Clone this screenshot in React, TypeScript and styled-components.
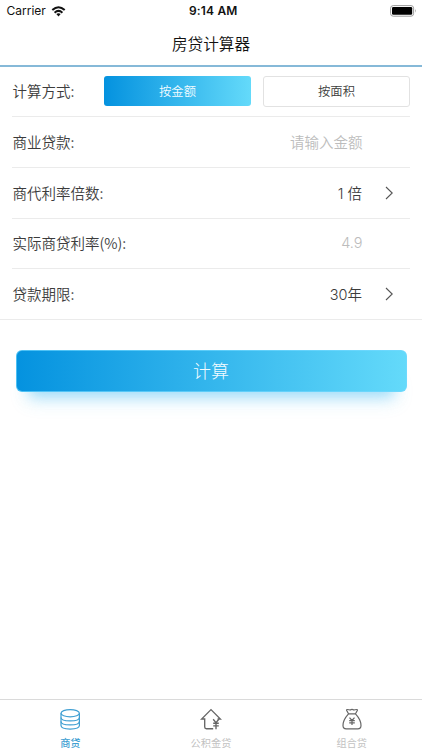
import React from "react";
import styled, { createGlobalStyle } from "styled-components";

const GlobalStyle = createGlobalStyle`
  * { box-sizing: border-box; }
  body { margin: 0; background: #fff; }
  button { font: inherit; margin: 0; padding: 0; cursor: pointer; }
`;

const Screen = styled.div`
  width: 100%;
  height: 750px;
  display: flex;
  flex-direction: column;
  background: #fff;
  color: #4a4a4a;
  font-family: Inter, "Noto Sans CJK SC", sans-serif;
`;

const StatusBar = styled.div`
  height: 22px;
  display: grid;
  grid-template-columns: 1fr auto 1fr;
  align-items: center;
  padding: 0 5px 0 6.5px;
  color: #111;
  font-size: 12px;
  line-height: 22px;
`;

const Carrier = styled.div`
  display: flex;
  align-items: center;
  gap: 5px;
`;

const Clock = styled.div`
  font-weight: 600;
  letter-spacing: 0.18px;
  padding-left: 3px;
`;

const BatteryBox = styled.div`
  display: flex;
  justify-content: flex-end;
`;

const Title = styled.h1`
  margin: 0;
  height: 45px;
  border-bottom: 2px solid #86b9d8;
  text-align: center;
  color: #111;
  font-size: 15.6px;
  font-weight: 350;
  line-height: 45px;
`;

const Form = styled.div`
  height: 253px;
  display: grid;
  grid-template-rows: 50px 51px 51px 50px 50px;
  border-bottom: 1px solid #ebebeb;
`;

const Row = styled.div<{ $last?: boolean }>`
  margin: 0 12px;
  display: flex;
  align-items: center;
  border-bottom: ${(p) => (p.$last ? "none" : "1px solid #ebebeb")};
  font-size: 14.5px;
  font-weight: 350;
`;

const Label = styled.div`
  flex: 1;
  padding-left: 0.5px;
  padding-bottom: 2px;
  white-space: nowrap;
  color: #3c3c3c;
  font-family: "Noto Sans CJK SC", sans-serif;
`;

const Value = styled.div<{ $muted?: boolean }>`
  color: ${(p) => (p.$muted ? "#bcbcbc" : "#3c3c3c")};
  padding-right: ${(p) => (p.$muted ? "47.5px" : "23px")};
  padding-bottom: 2px;
`;

const ArrowBox = styled.div`
  display: flex;
  padding-right: 16px;
`;

const Modes = styled.div`
  display: flex;
  gap: 12px;
`;

const ModeButton = styled.button<{ $active?: boolean }>`
  width: 147px;
  height: ${(p) => (p.$active ? "30px" : "31px")};
  padding-bottom: 1px;
  border-radius: 3px;
  border: ${(p) => (p.$active ? "none" : "1px solid #e2e2e2")};
  background: ${(p) => (p.$active ? "linear-gradient(90deg, #0492df, #64dafa)" : "#fff")};
  color: ${(p) => (p.$active ? "#f2fbff" : "#3c3c3c")};
  && { font-size: 12.3px; }
`;

const Submit = styled.button`
  align-self: center;
  margin: 30px 0 0;
  padding-bottom: 2px;
  width: 391px;
  height: 42px;
  border: 1px solid rgba(115, 217, 255, 0.65);
  border-radius: 6px;
  background: linear-gradient(90deg, #0492df, #64dafa) border-box;
  box-shadow: 0 16px 14px -14px rgba(72, 190, 245, 0.5), 0 20px 18px -12px rgba(72, 190, 245, 0.25);
  color: #f2fbff;
  && { font-size: 18px; font-weight: 300; }
`;

const TabBar = styled.nav`
  margin-top: auto;
  height: 51px;
  border-top: 1px solid #dadada;
  display: grid;
  grid-template-columns: repeat(3, 1fr);
`;

const Tab = styled.div<{ $active?: boolean }>`
  display: flex;
  flex-direction: column;
  align-items: center;
  padding-top: 8px;
  color: ${(p) => (p.$active ? "#3f9fd2" : "#c2c2c2")};
  font-size: 10.2px;
  font-weight: ${(p) => (p.$active ? 500 : 400)};
  line-height: 15px;
  svg { margin-bottom: 5px; }
`;

const Wifi = () => (
  <svg width="15" height="11" viewBox="0 0 14 11">
    <g fill="none" stroke="#111" strokeWidth="2">
      <path d="M0.8 4.1Q7-1.7 13.2 4.1" />
      <path d="M3.1 6.7Q7 3.1 10.9 6.7" />
    </g>
    <path d="M4.8 8Q7 6.3 9.2 8L7 10.4Z" fill="#111" />
  </svg>
);

const Battery = () => (
  <svg width="27" height="12" viewBox="0 0 27 12">
    <rect x="0.6" y="0.6" width="23" height="10.6" rx="2.6" fill="none" stroke="#9b9b9b" />
    <rect x="2" y="2" width="20.2" height="7.8" rx="1.3" fill="#000" />
    <path d="M25 4.1Q26.6 5.9 25 7.7Z" fill="#9b9b9b" />
  </svg>
);

const Arrow = () => (
  <ArrowBox>
    <svg width="9" height="14" viewBox="0 0 9 14" fill="none" stroke="#555" strokeWidth="1.1">
      <path d="M1 1L7.2 7L1 13" />
    </svg>
  </ArrowBox>
);

const Coins = () => (
  <svg width="22" height="23" viewBox="0 0 22 23" fill="none" stroke="#3f9fd2" strokeWidth="1.2">
    <ellipse cx="11.2" cy="5.2" rx="9.2" ry="3.6" />
    <path d="M2 5.2V17.6C2 22.2 20.4 22.2 20.4 17.6V5.2" />
    <path d="M2 9.4C2 14 20.4 14 20.4 9.4M2 13.5C2 18.1 20.4 18.1 20.4 13.5" />
  </svg>
);

const House = () => (
  <svg width="22" height="23" viewBox="0 0 22 23" fill="none" stroke="#666" strokeWidth="1.35">
    <path d="M17.6 11H20.4L11 1.6L1.6 11H4.7V19Q4.7 20.7 6.4 20.7H13.2" />
    <path d="M13.2 11.3L16 14.7L18.8 11.3M16 14.7V21.3M13.2 15.2H18.8M13.2 17.8H18.8" />
  </svg>
);

const MoneyBag = () => (
  <svg width="22" height="23" viewBox="0 0 22 23" fill="none" stroke="#666" strokeWidth="1.2">
    <path d="M7.5 5.8L5.6 2.4Q5.4 1.5 6.4 1.5Q8.2 1.6 9.1 2Q11 0.9 12.9 2Q13.8 1.6 15.6 1.5Q16.6 1.5 16.4 2.4L14.5 5.8C17 8.5 20 13.2 20 17.5Q20 20.8 16.8 20.8H5.2Q2 20.8 2 17.5C2 13.2 5 8.5 7.5 5.8Z" />
    <path d="M7.5 5.9H14.5M8.5 9.7L11 12.5L13.5 9.7M11 12.5V17M8.2 12.6H13.8M8.2 14.8H13.8" />
  </svg>
);

export default function App() {
  return (
    <Screen>
      <GlobalStyle />
      <StatusBar>
        <Carrier>Carrier <Wifi /></Carrier>
        <Clock>9:14 AM</Clock>
        <BatteryBox><Battery /></BatteryBox>
      </StatusBar>
      <Title>房贷计算器</Title>
      <Form>
        <Row>
          <Label>计算方式:</Label>
          <Modes>
            <ModeButton $active>按金额</ModeButton>
            <ModeButton>按面积</ModeButton>
          </Modes>
        </Row>
        <Row>
          <Label>商业贷款:</Label>
          <Value $muted>请输入金额</Value>
        </Row>
        <Row>
          <Label>商代利率倍数:</Label>
          <Value>1 倍</Value>
          <Arrow />
        </Row>
        <Row>
          <Label>实际商贷利率(%):</Label>
          <Value $muted>4.9</Value>
        </Row>
        <Row $last>
          <Label>贷款期限:</Label>
          <Value>30年</Value>
          <Arrow />
        </Row>
      </Form>
      <Submit>计算</Submit>
      <TabBar>
        <Tab $active><Coins />商贷</Tab>
        <Tab><House />公积金贷</Tab>
        <Tab><MoneyBag />组合贷</Tab>
      </TabBar>
    </Screen>
  );
}
